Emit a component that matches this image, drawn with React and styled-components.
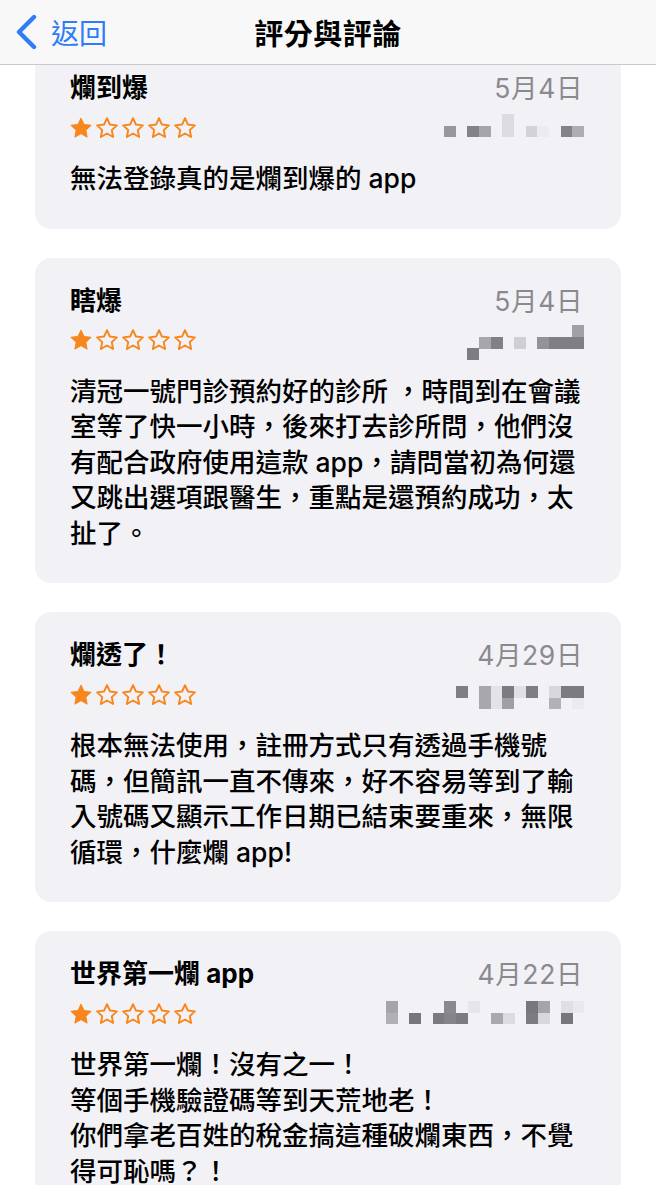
import React from "react";
import styled, { createGlobalStyle } from "styled-components";

const GlobalStyle = createGlobalStyle`
  html, body {
    margin: 0;
    padding: 0;
    background: #ffffff;
  }
  body {
    font-family: "Inter", "Noto Sans CJK TC", "Noto Sans", sans-serif;
    color: #000;
    -webkit-font-smoothing: antialiased;
  }
`;

const Page = styled.div`
  width: 656px;
  height: 1185px;
  display: flex;
  flex-direction: column;
  overflow: hidden;
  background: #ffffff;
`;

const NavBar = styled.header`
  flex: 0 0 auto;
  height: 64px;
  display: grid;
  grid-template-columns: 1fr auto 1fr;
  align-items: center;
  background: #f8f8f8;
  border-bottom: 1px solid #c9c9cc;
  position: relative;
  z-index: 1;
`;

const BackButton = styled.button`
  justify-self: start;
  display: flex;
  align-items: center;
  gap: 13px;
  padding: 0 0 0 14px;
  margin: 0;
  border: 0;
  background: none;
  color: #2f7cf6;
  font-family: "Noto Sans CJK TC", sans-serif;
  font-size: 28px;
  line-height: 1;
  cursor: pointer;
`;

const NavTitle = styled.h1`
  margin: 0;
  font-family: "Noto Sans CJK TC", sans-serif;
  font-size: 29px;
  font-weight: 700;
  letter-spacing: 0.5px;
  color: #000;
`;

const Viewport = styled.main`
  flex: 1 1 auto;
  overflow: hidden;
`;

const ReviewList = styled.div`
  display: flex;
  flex-direction: column;
  gap: 29px;
  padding: 0 35px;
  margin-top: ${(p) => p.$scroll}px;
`;

const Card = styled.article`
  background: #f2f2f6;
  border-radius: 16px;
  padding: 26px 38px 32px 35px;
`;

const TitleRow = styled.div`
  display: flex;
  justify-content: space-between;
  align-items: center;
  height: 34px;
`;

const ReviewTitle = styled.h2`
  margin: 0;
  font-size: 26px;
  font-weight: 700;
  line-height: 34px;
  color: #000;
`;

const ReviewDate = styled.span`
  font-size: 26.5px;
  line-height: 34px;
  color: #8a8a8e;
  letter-spacing: 0.6px;
`;

const MetaRow = styled.div`
  display: flex;
  justify-content: space-between;
  align-items: flex-start;
  height: 36px;
  margin-top: 4px;
`;

const Stars = styled.div`
  display: flex;
  gap: 4px;
  align-self: center;
`;

const Mosaic = styled.svg`
  display: block;
  margin-top: ${(p) => p.$top}px;
  margin-right: -1px;
  shape-rendering: crispEdges;
`;

const Body = styled.p`
  margin: 16px -8px 0 0;
  font-size: 26.5px;
  font-weight: 500;
  line-height: 35.5px;
  color: #000;
  white-space: pre-line;
`;

const STAR =
  "M12 2.6l2.9 6.2 6.8.8-5 4.7 1.3 6.7L12 17.6l-6 3.4 1.3-6.7-5-4.7 6.8-.8z";

function Star({ filled }) {
  return (
    <svg width="22" height="21" viewBox="1.2 1.6 21.6 20.2">
      <path
        d={STAR}
        fill={filled ? "#f7861c" : "none"}
        stroke="#f7861c"
        strokeWidth={filled ? 1 : 1.9}
        strokeLinejoin="round"
      />
    </svg>
  );
}

function Rating({ value }) {
  return (
    <Stars>
      {[1, 2, 3, 4, 5].map((n) => (
        <Star key={n} filled={n <= value} />
      ))}
    </Stars>
  );
}

const CELL = 11.67;

function Pixelated({ cols, rows, cells, top }) {
  return (
    <Mosaic
      $top={top}
      width={cols * CELL}
      height={rows * CELL}
      viewBox={`0 0 ${cols * CELL} ${rows * CELL}`}
    >
      {cells.map(([c, r, color], i) => (
        <rect
          key={i}
          x={c * CELL}
          y={r * CELL}
          width={CELL + 0.2}
          height={CELL + 0.2}
          fill={color}
        />
      ))}
    </Mosaic>
  );
}

const reviews = [
  {
    title: "爛到爆",
    date: "5月4日",
    stars: 1,
    mosaic: {
      cols: 12,
      rows: 2,
      top: 5,
      cells: [
        [0, 1, "#98989c"],
        [2, 1, "#838387"],
        [3, 1, "#a6a6aa"],
        [5, 0, "#dcdce0"],
        [5, 1, "#dcdce0"],
        [7, 1, "#d3d3d7"],
        [8, 1, "#ececf0"],
        [10, 1, "#838387"],
        [11, 1, "#aeaeb2"],
      ],
    },
    body: "無法登錄真的是爛到爆的 app",
  },
  {
    title: "瞎爆",
    date: "5月4日",
    stars: 1,
    mosaic: {
      cols: 12,
      rows: 3,
      top: 3,
      cells: [
        [2, 2, "#7d7d82"],
        [3, 1, "#a7a7ab"],
        [4, 1, "#808085"],
        [6, 1, "#cfcfd3"],
        [8, 1, "#939397"],
        [9, 1, "#7f7f84"],
        [10, 1, "#7f7f84"],
        [11, 1, "#7f7f84"],
        [11, 0, "#a1a1a5"],
      ],
    },
    body:
      "清冠一號門診預約好的診所 ，時間到在會議室等了快一小時，後來打去診所問，他們沒有配合政府使用這款 app，請問當初為何還又跳出選項跟醫生，重點是還預約成功，太扯了。",
  },
  {
    title: "爛透了！",
    date: "4月29日",
    stars: 1,
    mosaic: {
      cols: 12,
      rows: 2,
      top: 10,
      cells: [
        [1, 0, "#7f7f83"],
        [3, 0, "#a8a8ac"],
        [3, 1, "#a8a8ac"],
        [4, 0, "#e3e3e7"],
        [4, 1, "#e3e3e7"],
        [5, 0, "#7c7c80"],
        [5, 1, "#a0a0a4"],
        [6, 0, "#e1e1e5"],
        [7, 0, "#7f7f83"],
        [9, 0, "#d8d8dc"],
        [9, 1, "#b2b2b6"],
        [10, 0, "#7c7c80"],
        [11, 0, "#7c7c80"],
        [11, 1, "#ebebef"],
      ],
    },
    body:
      "根本無法使用，註冊方式只有透過手機號碼，但簡訊一直不傳來，好不容易等到了輸入號碼又顯示工作日期已結束要重來，無限循環，什麼爛 app!",
  },
  {
    title: "世界第一爛 app",
    date: "4月22日",
    stars: 1,
    mosaic: {
      cols: 17,
      rows: 2,
      top: 6,
      cells: [
        [0, 0, "#a5a5a9"],
        [0, 1, "#b0b0b4"],
        [2, 1, "#77777b"],
        [4, 1, "#7b7b7f"],
        [5, 0, "#8a8a8e"],
        [5, 1, "#858589"],
        [6, 1, "#7b7b80"],
        [7, 0, "#e6e6ea"],
        [9, 1, "#a9a9ad"],
        [10, 1, "#dcdce0"],
        [12, 0, "#78787c"],
        [12, 1, "#7c7c80"],
        [13, 0, "#a5a5a9"],
        [13, 1, "#d8d8dc"],
        [15, 0, "#dfdfe3"],
        [15, 1, "#77777b"],
        [16, 0, "#e9e9ed"],
      ],
    },
    body:
      "世界第一爛！沒有之一！\n等個手機驗證碼等到天荒地老！\n你們拿老百姓的稅金搞這種破爛東西，不覺得可恥嗎？！",
  },
];

function ReviewCard({ review }) {
  return (
    <Card>
      <TitleRow>
        <ReviewTitle>{review.title}</ReviewTitle>
        <ReviewDate>{review.date}</ReviewDate>
      </TitleRow>
      <MetaRow>
        <Rating value={review.stars} />
        <Pixelated {...review.mosaic} />
      </MetaRow>
      <Body>{review.body}</Body>
    </Card>
  );
}

export default function App() {
  return (
    <>
      <GlobalStyle />
      <Page>
        <NavBar>
          <BackButton type="button">
            <svg width="24" height="36" viewBox="0 0 24 36">
              <path
                d="M20 3 L5 18 L20 33"
                fill="none"
                stroke="#2f7cf6"
                strokeWidth="4.4"
                strokeLinecap="round"
                strokeLinejoin="round"
              />
            </svg>
            返回
          </BackButton>
          <NavTitle>評分與評論</NavTitle>
          <span />
        </NavBar>
        <Viewport>
          <ReviewList $scroll={-20}>
            {reviews.map((r) => (
              <ReviewCard key={r.title} review={r} />
            ))}
          </ReviewList>
        </Viewport>
      </Page>
    </>
  );
}
